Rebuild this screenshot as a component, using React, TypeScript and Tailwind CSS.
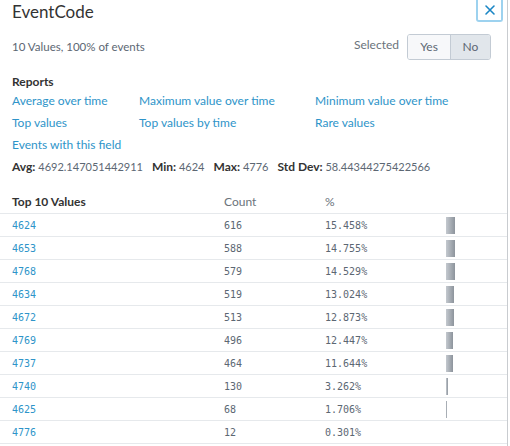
import React from "react";

const REPORTS = [
  ["Average over time", "Maximum value over time", "Minimum value over time"],
  ["Top values", "Top values by time", "Rare values"],
  ["Events with this field", "", ""],
];

const ROWS = [
  { value: "4624", count: 616, pct: 15.458 },
  { value: "4653", count: 588, pct: 14.755 },
  { value: "4768", count: 579, pct: 14.529 },
  { value: "4634", count: 519, pct: 13.024 },
  { value: "4672", count: 513, pct: 12.873 },
  { value: "4769", count: 496, pct: 12.447 },
  { value: "4737", count: 464, pct: 11.644 },
  { value: "4740", count: 130, pct: 3.262 },
  { value: "4625", count: 68, pct: 1.706 },
  { value: "4776", count: 12, pct: 0.301 },
];

export default function App() {
  return (
    <div className="w-[510px] h-[446px] bg-white overflow-hidden font-['Lato','Open_Sans',sans-serif]">
      <div className="relative w-[508px] h-full border-r border-[#c9ccd0]">
        {/* close */}
        <button className="absolute top-0 right-[4px] w-[27px] h-[22px] flex items-center justify-center border-2 border-[#9dd2ef] rounded-b-[3px] border-t-0 text-[#1a86c5]">
          <svg width="12" height="12" viewBox="0 0 12 12" fill="none" stroke="currentColor" strokeWidth="1.6" strokeLinecap="round">
            <path d="M2 2 L10 10 M10 2 L2 10" />
          </svg>
        </button>

        <div className="px-3 pt-[2px]">
          <h2 className="text-[17px] leading-[20px] text-[#333]">EventCode</h2>

          <div className="flex items-center justify-between mt-[12px] pr-[4px]">
            <span className="text-[11.5px] text-[#5c6773]">10 Values, 100% of events</span>
            <div className="flex items-center gap-[8px]">
              <span className="text-[12px] text-[#6b737b] -mt-[4px]">Selected</span>
              <div className="flex h-[26px] border border-[#c3cbd4] rounded-[3px] overflow-hidden text-[12px] text-[#5c6773]">
                <span className="w-[43px] flex items-center justify-center bg-[#f7f8fa] border-r border-[#c3cbd4]">Yes</span>
                <span className="w-[39px] flex items-center justify-center bg-[#e1e6eb]">No</span>
              </div>
            </div>
          </div>

          <div className="mt-[13px] text-[12px] font-bold text-[#333]">Reports</div>
          <div className="mt-[2px] flex flex-col gap-[6px] text-[12px] leading-[16px] text-[#2e94c9]">
            {REPORTS.map((row, i) => (
              <div key={i} className="grid grid-cols-[127px_176px_1fr]">
                {row.map((r, j) => (
                  <span key={j}>{r}</span>
                ))}
              </div>
            ))}
          </div>

          <div className="mt-[6px] text-[11px] leading-[16px] text-[#5c6773] flex gap-[9px]">
            <span><b className="text-[#333] text-[12px]">Avg:</b> 4692.147051442911</span>
            <span><b className="text-[#333] text-[12px]">Min:</b> 4624</span>
            <span><b className="text-[#333] text-[12px]">Max:</b> 4776</span>
            <span><b className="text-[#333] text-[12px]">Std Dev:</b> 58.44344275422566</span>
          </div>
        </div>

        <div className="mt-[16px]">
          <div className="grid grid-cols-[212px_101px_121px_1fr] px-3 h-[23px] items-center border-b border-[#e6e9ec] text-[12px]">
            <span className="font-bold text-[#333]">Top 10 Values</span>
            <span className="text-[#6b737b]">Count</span>
            <span className="text-[#6b737b]">%</span>
            <span />
          </div>
          {ROWS.map((r) => (
            <div
              key={r.value}
              className="grid grid-cols-[212px_101px_121px_1fr] px-3 h-[23px] items-center border-b border-[#e6e9ec] font-['DejaVu_Sans_Mono',monospace] text-[10px] text-[#5c6773]"
            >
              <span className="text-[#2e94c9]">{r.value}</span>
              <span>{r.count}</span>
              <span>{r.pct.toFixed(3)}%</span>
              <span className="flex items-center">
                <span
                  className="h-[17px] bg-gradient-to-r from-[#c4c9cf] to-[#8d949c]"
                  style={{ width: Math.round(r.pct * 0.6) }}
                />
              </span>
            </div>
          ))}
        </div>
      </div>
    </div>
  );
}
